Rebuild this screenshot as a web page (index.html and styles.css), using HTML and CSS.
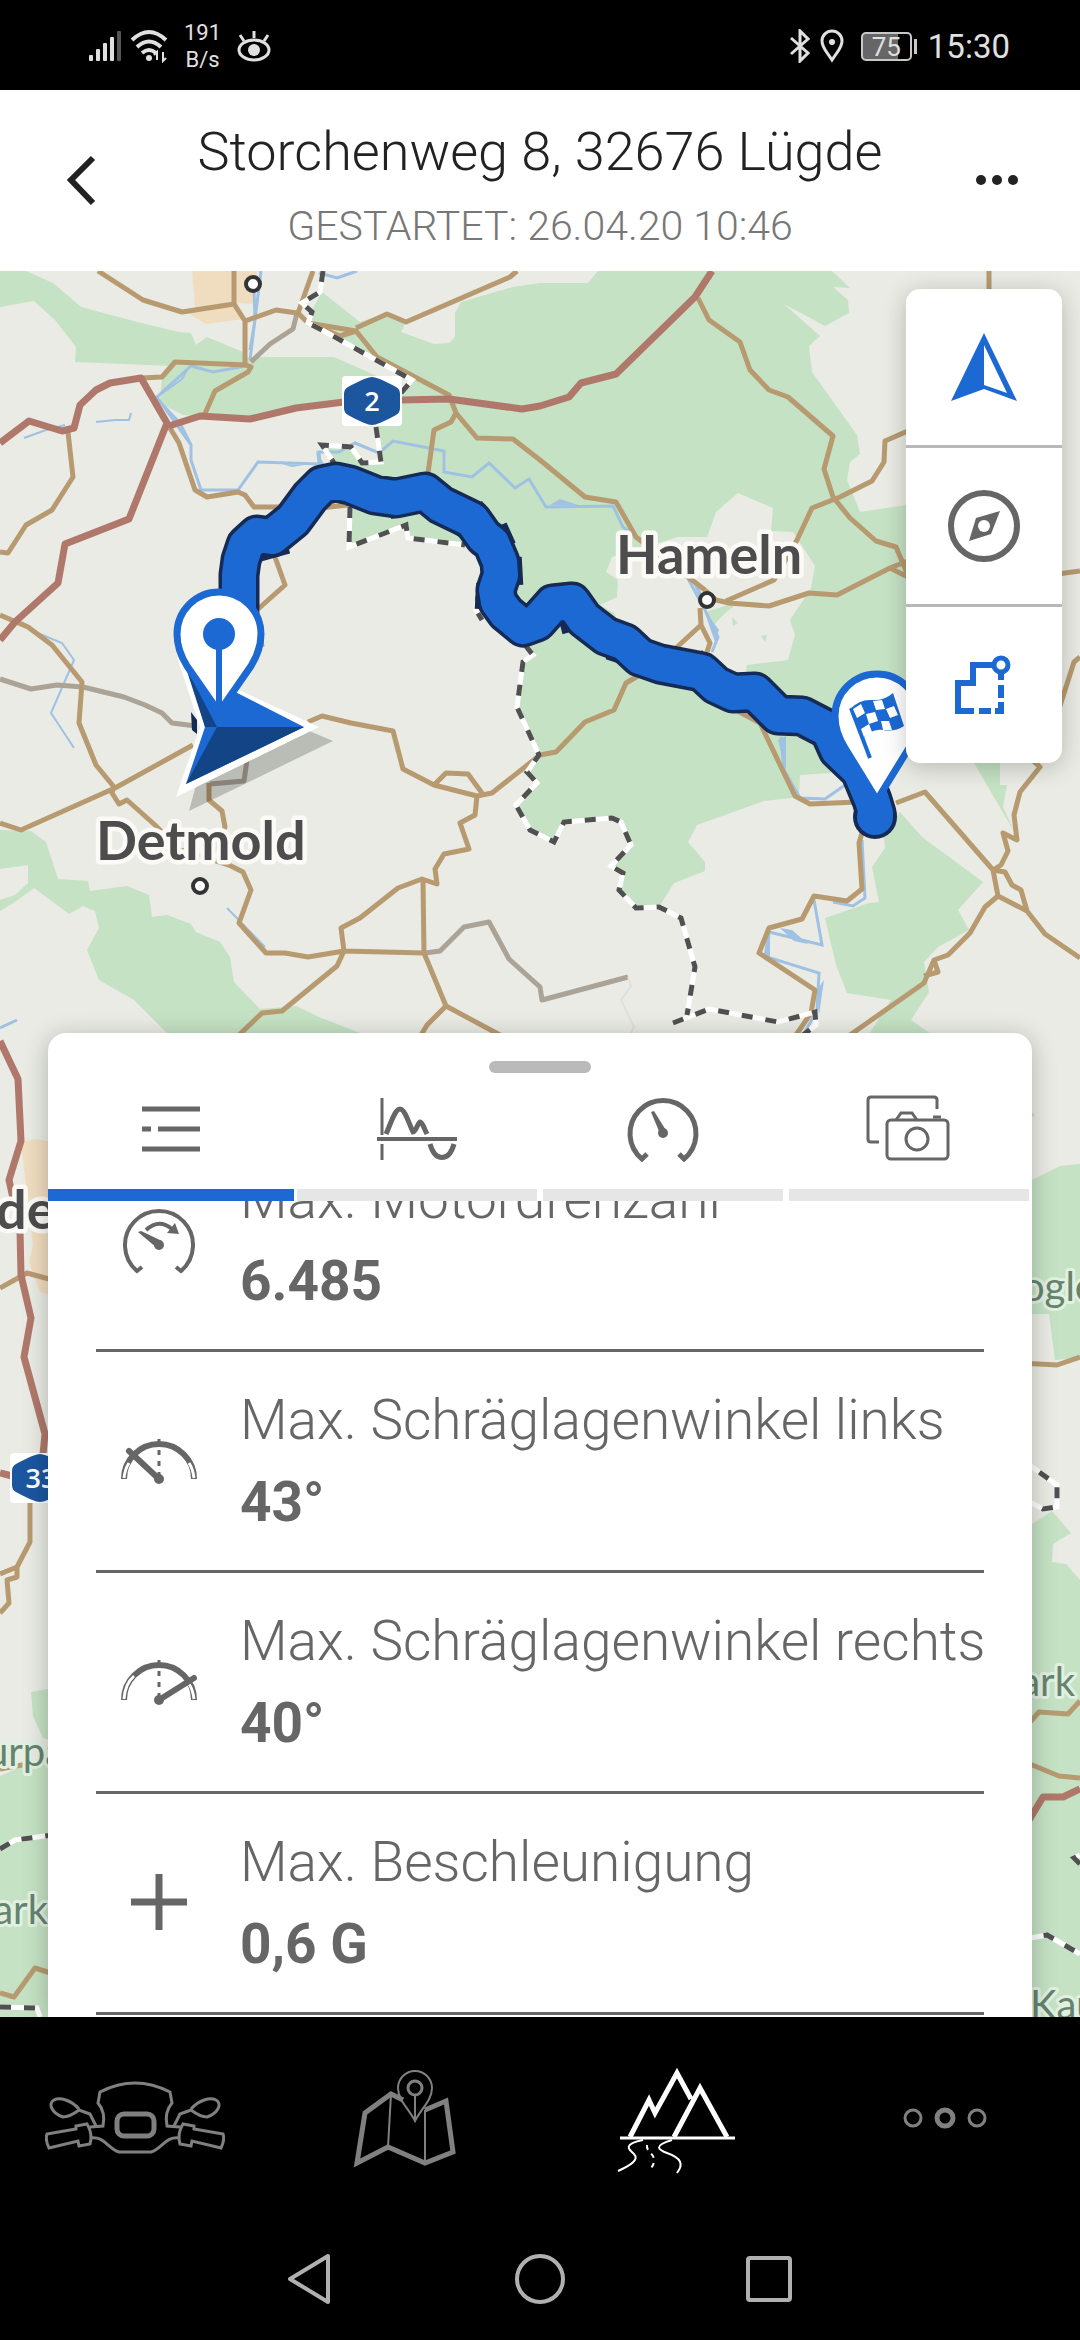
FILE: index.html
```
<!DOCTYPE html>
<html lang="de">
<head>
  <meta charset="utf-8">
  <meta name="viewport" content="width=device-width, initial-scale=1">
  <title>Storchenweg 8, 32676 Lügde</title>
  <link rel="stylesheet" href="styles.css">
</head>
<body>
  <div class="status-bar">
    <div class="status-group">
      <svg width="34" height="34" viewBox="0 0 34 34" fill="#e0e0e0">
        <rect x="1" y="26" width="4" height="6" rx="1"/>
        <rect x="8" y="20" width="4" height="12" rx="1"/>
        <rect x="15" y="14" width="4" height="18" rx="1"/>
        <rect x="22" y="8" width="4" height="24" rx="1"/>
        <rect x="29" y="2" width="4" height="30" rx="1" fill="#555"/>
      </svg>
      <svg width="38" height="34" viewBox="0 0 38 34" fill="none" stroke="#e0e0e0" stroke-width="4">
        <path d="M2 11Q19 -5 36 11M7 18Q19 7 31 18M12 24Q19 18 26 24"/>
        <circle cx="19" cy="29" r="3" fill="#e0e0e0" stroke="none"/>
        <path d="M27 31V23l-3 3M33 23v9l3-3" stroke-width="2"/>
      </svg>
      <div class="net-speed"><span>191</span><span>B/s</span></div>
      <svg width="34" height="34" viewBox="0 0 34 34" fill="none" stroke="#e0e0e0" stroke-width="3">
        <ellipse cx="17" cy="21" rx="15" ry="10"/>
        <circle cx="17" cy="21" r="6" fill="#e0e0e0" stroke="none"/>
        <path d="M17 9V2M7 12L3 6M27 12l4-6"/>
      </svg>
    </div>
    <div class="status-group">
      <svg width="22" height="34" viewBox="0 0 22 34" fill="none" stroke="#e0e0e0" stroke-width="3">
        <path d="M2 9l17 15-8 8V2l8 8L2 25"/>
      </svg>
      <svg width="26" height="34" viewBox="0 0 26 34" fill="none" stroke="#e0e0e0" stroke-width="3">
        <path d="M13 31C8 23 3 19 3 12a10 10 0 0 1 20 0c0 7-5 11-10 19z"/>
        <circle cx="13" cy="13" r="3" fill="#e0e0e0" stroke="none"/>
      </svg>
      <div class="battery">75</div>
      <span class="clock">15:30</span>
    </div>
  </div>

  <header class="header">
    <button class="header-btn" aria-label="Zurück">
      <svg width="54" height="54" viewBox="0 0 54 54" fill="none" stroke="#222" stroke-width="6">
        <path d="M39 4L17 26l22 23"/>
      </svg>
    </button>
    <div class="header-text">
      <h1>Storchenweg 8, 32676 Lügde</h1>
      <p>GESTARTET: 26.04.20 10:46</p>
    </div>
    <button class="header-btn" aria-label="Mehr">
      <svg width="54" height="54" viewBox="0 0 54 54" fill="#222">
        <circle cx="9" cy="26" r="5"/><circle cx="25" cy="26" r="5"/><circle cx="41" cy="26" r="5"/>
      </svg>
    </button>
  </header>

  <main class="map">
    <svg class="map-canvas" viewBox="0 271 1080 1746" preserveAspectRatio="xMidYMin slice">
      <!-- forest -->
      <g class="forest">
        <path d="M0 271H26L53 283 81 307 141 323 179 332 191 333 196 345 207 337 243 352 248 363 172 366 75 362 76 347 55 320 34 301 0 307z"/>
        <path d="M253 357H334L379 377 401 393 344 403 296 407 252 418 200 416 183 415 160 403 162 377 172 366z"/>
        <path d="M411 380L324 330 312 320 312 310 322 292 360 322 387 313 406 322 401 332 434 344 449 343 455 337 455 313 461 302 513 287 540 283 588 283 598 271H832L850 288 833 287 848 300 849 313 825 326 784 304 820 336 809 346 812 372 857 435 860 454 850 462 847 480 860 512 906 505V700L833 768 831 773 800 775 799 797 764 801 697 825 688 842 705 862 705 871 674 883 659 907 636 908 619 890 623 873 611 866 631 845 621 822 612 818 564 822 554 842 537 837 530 830 516 805 537 783 527 772 539 755 517 707 523 662 533 655 500 615 480 550 465 545 408 538 406 525 349 547 350 507 334 463 322 445 351 447 362 463 380 462 376 427 401 393z"/>
        <path d="M974 763H1000V785H1007L1003 807 1015 833z"/>
        <path d="M900 812L922 837 983 882 958 910 969 930 938 947 924 962 929 992 911 1020 931 1034H869L891 1000 847 993 836 965 825 918 869 903 879 902 872 867 885 848 884 837z"/>
        <path d="M0 830L31 831 46 842 58 879 88 881 90 891 127 886 149 895 152 917 167 915 191 924 196 932 220 942 230 957 234 982 260 1009 296 1006 319 1017 360 1033H167L134 1000 99 980 87 950 99 928 95 911 83 906 69 914 34 888 15 902 0 911V900L15 895 28 883V865L0 869z"/>
        <path d="M31 1692L60 1687V1743L43 1738 33 1716zM0 1776L60 1750V2017H0z"/>
        <path d="M1020 1186L1060 1166 1080 1164V1358L1055 1360 1049 1314H1020zM1020 1532L1052 1511 1071 1533 1053 1544 1052 1562 1066 1564 1080 1580V2017H1020zM1028 1109l7 6-7 6z"/>
      </g>
      <path class="land" d="M716 512L738 493 773 508 771 531 793 532 815 566 811 588 802 602 790 620 795 635 788 660 747 665 746 673 640 660 614 613 600 605 617 597 618 580 606 572 612 557 678 537 707 537z"/>
      <path class="forest" d="M706 612L740 601 722 616 714 625zM732 617l6 6-5 3zM761 636l6-1-2 7z"/>
      <path class="town" d="M192 271L195 307 186 312 206 324 243 319 238 303 253 304 257 271zM21 1142L37 1139 60 1144V1298L40 1292 29 1262 33 1245z"/>

      <!-- rivers -->
      <path class="river" d="M261 271L250 360M254 290L255 320 250 350M246 366L213 372 191 366 157 397 191 445 191 460 201 490 238 490 258 462 320 464 319 452 339 452 355 443 379 453 393 441 444 451 444 472 472 477 489 463 515 488 529 479 546 507 613 506 623 527 685 573 705 610 718 637 712 652M319 273L337 278 357 271M160 402L180 423 191 445"/>
      <path class="river thin" d="M24 438L46 430 65 425M96 422L115 420 129 420 131 413M22 622L40 634 62 643 74 660 51 713 74 748M227 908L265 947M157 397L182 379 187 370"/>
      <path class="river" d="M0 1028L17 1020M781 737L784 770 800 798 825 799 848 783M862 840L865 898 853 906 833 902M814 900L822 945 769 932 767 957 819 973 817 1010 805 1032"/>
      <path class="river-fill" d="M778 740l8-4v34zM780 928l12 2 16 14-14-3zM766 940l4-10v28l-6-4zM817 990l7-10-5 35zM690 575l9 12 8 20-8-10zM704 610l15 20-4 12zM550 505l10-6 18 6zM316 450l8 14-6 2zM282 464l10 3 12-2z"/>

      <!-- roads -->
      <path class="road gray" d="M297 313L293 329 270 344 251 362M0 679L31 689 57 685 83 687 124 697 145 705 162 713 172 723 196 726M425 953L440 951 464 927 489 922 509 959 540 987 542 1000 628 977M210 784L244 781 247 760"/>
      <path class="road faint" d="M628 977L631 986 621 1000 634 1027 631 1033"/>
      <path class="road" d="M98 271L143 300 182 312 234 304 245 321 276 310 297 313M234 271V304M245 321V363M313 271L298 313 308 323 356 331 377 357 449 395 456 413 477 438 513 439 540 460 585 497 616 502 636 537 705 590M308 323L340 336 356 331M517 271L510 277 406 322 387 314 356 328M141 378L162 377 175 362 246 365 251 367 248 372 215 391 203 418M167 423L179 443 195 490 207 497 238 492 245 495 254 507 279 507 320 508 348 505M68 432L73 477 52 510 26 525 8 553 0 552M456 413L451 422 434 430 428 473M275 557L285 585 257 610 262 647"/>
      <path class="road" d="M0 615L28 627 52 645 82 682 79 723 96 765 114 787 112 793 119 804 127 800 155 825 180 850 207 858 229 865 243 872 251 890 239 923 266 953 285 953 308 957 344 951 424 953M0 823L21 830 115 788 193 745M308 722L322 716 351 723 393 731 403 769 434 785 477 796 492 793 540 755 556 752 585 722 614 710 626 683 643 673M434 785L446 773 468 774 482 793M477 796L475 815 460 823 469 849 444 854 435 869 437 884 422 879 398 888 360 918 341 928 344 951 337 966 282 1011 262 1013 239 1035M423 880L424 953 446 1006 427 1025 421 1035M446 1006L500 1035M209 783V800L222 811 225 827 213 853"/>
      <path class="road" d="M698 298L709 320 740 342 750 370 769 390 788 397 833 436 824 469 833 497 850 518 876 541 896 547 910 580M910 430L885 441 884 462 872 481 840 497 812 508 797 540 774 580 726 601M705 590L716 600 729 603 769 606 809 593 837 595 890 568 910 560M890 568L908 577M700 608L701 625 676 648M701 625L710 643 707 652M989 271V300M1050 575L1080 571M1058 712L1074 662 1080 657"/>
      <path class="road" d="M736 710L760 723 795 796 810 804 857 802M896 803L925 792 993 870 1005 872 1012 885 1021 890 1027 911 998 896 993 870 1001 865 1008 851 1003 833 1017 840 1014 815 1020 792 1040 767 1030 758M1027 911L1045 934 1080 958M998 896L985 907 970 933 948 955 934 960 924 983 850 1035M934 960L938 972 924 976M862 833L859 843 862 889 847 901 814 896 802 919 769 928 759 953 815 990 811 1013 796 1035"/>
      <path class="road" d="M0 1288L27 1273 60 1282M30 1502V1542L17 1567 0 1574M17 1567V1577L7 1580 9 1603 0 1613M0 1769L60 1758M0 1993L14 1997 35 1968 60 1976M1020 1363L1057 1365 1080 1357M1020 1733L1039 1712 1068 1714 1080 1701M1020 1760L1059 1776 1080 1778"/>
      <path class="road major" d="M0 443L29 421 62 431 74 428 80 405 96 390 110 383 141 378 167 423 129 519 65 544 58 583 15 622 0 640M169 426L200 416 250 419 296 408 344 402 401 400 449 399 522 409 540 406 569 397 581 383 616 374 695 297 712 271M0 1041L18 1079 21 1141 9 1180 20 1230 21 1275 31 1318 24 1357 45 1434 43 1454M0 1473L12 1476M1020 1835L1043 1797H1063L1080 1789"/>

      <!-- district borders -->
      <path id="border" class="border-base" d="M323 271L320 292 302 303 312 312 308 323 324 331 412 380 401 393M376 427L381 462 362 463 351 447 322 445 334 463M350 507L349 547 406 525 408 538 465 545M479 590L476 610 482 620M525 645L533 655 523 662 517 707 539 755 527 772 537 783 516 805 530 830 554 842 564 822 612 818 621 822 631 845 611 866 623 873 619 890 636 908 659 907 681 918 695 967 687 1015M673 1023L709 1009 778 1022 815 1012 816 1025 803 1035M0 1849L15 1840 60 1834M0 2007L37 2008 40 2017M1020 1458L1057 1485V1507L1043 1509 1020 1497M1020 1940L1047 1935 1080 1954M1080 1864L1074 1858 1080 1855"/>
      <path class="border-dash" d="M323 271L320 292 302 303 312 312 308 323 324 331 412 380 401 393M376 427L381 462 362 463 351 447 322 445 334 463M350 507L349 547 406 525 408 538 465 545M479 590L476 610 482 620M525 645L533 655 523 662 517 707 539 755 527 772 537 783 516 805 530 830 554 842 564 822 612 818 621 822 631 845 611 866 623 873 619 890 636 908 659 907 681 918 695 967 687 1015M673 1023L709 1009 778 1022 815 1012 816 1025 803 1035M0 1849L15 1840 60 1834M0 2007L37 2008 40 2017M1020 1458L1057 1485V1507L1043 1509 1020 1497M1020 1940L1047 1935 1080 1954M1080 1864L1074 1858 1080 1855"/>

      <!-- road shields -->
      <g class="shield">
        <rect x="342" y="376" width="60" height="50" rx="4" fill="#fff"/>
        <path d="M372 377Q378 377 396 387 400 389 400 394V408Q400 413 396 415 378 425 372 425 366 425 348 415 344 413 344 408V394Q344 389 348 387 366 377 372 377z"/>
        <text x="372" y="411" text-anchor="middle">2</text>
        <rect x="10" y="1453" width="60" height="50" rx="4" fill="#fff"/>
        <path d="M40 1454Q46 1454 64 1464 68 1466 68 1471V1485Q68 1490 64 1492 46 1502 40 1502 34 1502 16 1492 12 1490 12 1485V1471Q12 1466 16 1464 34 1454 40 1454z"/>
        <text x="41" y="1488" text-anchor="middle">33</text>
      </g>

      <!-- places -->
      <g class="place-dot">
        <circle cx="253" cy="284" r="7"/>
        <circle cx="707" cy="600" r="7"/>
        <circle cx="200" cy="886" r="7"/>
      </g>
      <g class="place">
        <text x="616" y="574">Hameln</text>
        <text x="96" y="860">Detmold</text>
        <text x="-4" y="1229">de</text>
      </g>
      <g class="park">
        <text x="-14" y="1766">urpa</text>
        <text x="48" y="1924" text-anchor="end">ark</text>
        <text x="1022" y="1301">ogle</text>
        <text x="1075" y="1696" text-anchor="end">ark</text>
        <text x="1030" y="2019">Kau</text>
      </g>

      <!-- recorded route -->
      <path class="route-edge" d="M236 640L239 607 239 575 241 560 246 545 257 535 272 537 293 520 310 497 322 485 336 482 350 485 375 495 396 498 425 492 441 505 472 520 484 537 492 543 500 562 501 575 496 590 498 602 506 613 523 627 537 622 553 604 572 602 584 619 606 636 625 643 640 657 660 664 702 672 716 685 733 693 755 692 778 715 802 716 829 730 838 750 860 771 872 800 876 813"/>
      <path class="route-nick" d="M262 556L284 550M309 523L316 513M395 513L424 506M458 530L466 536M408 484L426 481M481 508L487 516M504 529L509 540M517 562L518 580M481 588L480 604M545 594L550 596M564 621L566 628M612 656L618 658M226 572L227 562M676 668L700 657M722 695L730 702M770 705L766 700"/>
      <circle cx="875" cy="817" r="22" fill="#152a55"/>
      <path class="route" d="M236 640L239 607 239 575 241 560 246 545 257 535 272 537 293 520 310 497 322 485 336 482 350 485 375 495 396 498 425 492 441 505 472 520 484 537 492 543 500 562 501 575 496 590 498 602 506 613 523 627 537 622 553 604 572 602 584 619 606 636 625 643 640 657 660 664 702 672 716 685 733 693 755 692 778 715 802 716 829 730 838 750 860 771 872 800 876 813"/>
      <circle cx="875" cy="817" r="18" fill="#1c69d4"/>

      <!-- current position -->
      <path d="M191 712l6 8v14l-5-4z" fill="#152a55"/>
      <path d="M333 741L189 811 200 770 300 727z" fill="#000" opacity=".2"/>
      <path d="M176 797L319 727 239 690 177 657 200 727z" fill="#fff"/>
      <path d="M186 784L304 727 188 668 205 727z" fill="#1c69d4"/>
      <path d="M186 784L304 727H217zM186 668L217 727H205z" fill="#124486"/>

      <!-- start and finish pins -->
      <path class="pin" d="M219 712L187 666Q177 650 177 634a42 42 0 0 1 84 0Q261 650 251 666z"/>
      <circle cx="219" cy="634" r="16" fill="#1c69d4"/>
      <path d="M219 640V708" stroke="#1c69d4" stroke-width="6"/>
      <path class="pin" d="M877 800L845 748Q835 732 835 716a42 42 0 0 1 84 0Q919 732 909 748z"/>
      <path d="M851 708L870 758" stroke="#1c69d4" stroke-width="4"/>
      <path d="M850 709Q860 699 872 700T893 693L904 726Q895 732 883 730T862 740z" fill="#1c69d4"/>
      <path d="M853 709l8-5 4 9-8 5zM873 701l9-1 3 9-9 1zM866 714l9-2 3 9-9 3zM886 709l8-3 4 9-8 3zM861 729l8-5 3 8-8 5zM881 721l8 0 3 9-9 0z" fill="#fff"/>
    </svg>

    <div class="map-tools">
      <button class="tool-btn" aria-label="Position">
        <svg width="78" height="78" viewBox="0 0 78 78" fill="#1c69d4">
          <path fill-rule="evenodd" d="M39 5L72 73 39 61 6 73zM39 17V57L62 65z"/>
        </svg>
      </button>
      <button class="tool-btn" aria-label="Kompass">
        <svg width="78" height="78" viewBox="0 0 78 78">
          <circle cx="39" cy="39" r="33" fill="none" stroke="#666" stroke-width="6"/>
          <path d="M55 24L46 47 24 54 31 31z" fill="#666"/>
          <circle cx="39" cy="39" r="6" fill="#fff"/>
        </svg>
      </button>
      <button class="tool-btn" aria-label="Route">
        <svg width="78" height="78" viewBox="0 0 78 78" fill="none" stroke="#1c69d4" stroke-width="6">
          <path d="M49 19H28V37H13V68M13 65H29M34 65H46M50 65H59M56 27V34M56 39V52M56 56V68"/>
          <circle cx="56" cy="19" r="7" stroke-width="5"/>
        </svg>
      </button>
    </div>

    <section class="sheet">
      <div class="handle"></div>
      <div class="tabs" role="tablist">
        <button class="tab active" role="tab" aria-selected="true" aria-label="Liste">
          <svg width="96" height="80" viewBox="0 0 96 80" stroke="#666" stroke-width="5">
            <path d="M19 18H77M19 38H28M35 38H77M19 58H77"/>
          </svg>
        </button>
        <button class="tab" role="tab" aria-selected="false" aria-label="Verlauf">
          <svg width="96" height="80" viewBox="0 0 96 80" fill="none" stroke="#666" stroke-width="3">
            <path d="M13 7V44M13 53V69"/>
            <path d="M8 48H88" stroke-width="4"/>
            <path d="M17 43C22 32 26 18 31 18S40 33 44 41C47 41 49 31 51 31S56 39 58 43" stroke-width="5"/>
            <path d="M61 53C66 71 80 71 85 53" stroke-width="5"/>
          </svg>
        </button>
        <button class="tab" role="tab" aria-selected="false" aria-label="Geschwindigkeit">
          <svg width="96" height="80" viewBox="0 0 96 80" fill="none" stroke="#666" stroke-width="5">
            <path d="M32 63L27 68A33 33 0 1 1 69 68L64 63"/>
            <path d="M36 21L39 20 52 41 46 45z" fill="#666" stroke="none"/>
            <circle cx="48" cy="42" r="5" fill="#666" stroke="none"/>
          </svg>
        </button>
        <button class="tab" role="tab" aria-selected="false" aria-label="Fotos">
          <svg width="96" height="80" viewBox="0 0 96 80" fill="none" stroke="#666" stroke-width="3">
            <path d="M18 51H10Q7 51 7 48V9Q7 6 10 6H73Q76 6 76 9V18"/>
            <rect x="26" y="29" width="61" height="39" rx="4"/>
            <path d="M35 29L40 22H51L56 29M72 26H80"/>
            <circle cx="56" cy="48" r="11"/>
          </svg>
        </button>
      </div>

      <ul class="stats">
        <li class="stat">
          <svg class="stat-icon" width="126" height="90" viewBox="0 0 126 90" fill="none" stroke="#666" stroke-width="4">
            <path d="M46 72L41 76A34 34 0 1 1 85 76L80 72"/>
            <path d="M50 35Q63 23 76 34"/>
            <path d="M71 38L83 39 79 28z" fill="#666" stroke="none"/>
            <path d="M42 37L45 36 66 46 61 53z" fill="#666" stroke="none"/>
            <circle cx="63" cy="50" r="5" fill="#666" stroke="none"/>
          </svg>
          <div class="stat-text">
            <span class="label">Max. Motordrehzahl</span>
            <span class="value">6.485</span>
          </div>
        </li>
        <li class="stat">
          <svg class="stat-icon" width="126" height="90" viewBox="0 0 126 90" fill="none" stroke="#666">
            <path d="M28 63A35 35 0 0 1 98 63" stroke-width="6"/>
            <path d="M28 62Q29 53 33 47M98 62Q97 53 93 47" stroke="#fff" stroke-width="3"/>
            <path d="M63 23V60" stroke-width="3" stroke-dasharray="5 6"/>
            <path d="M33 35L63 63" stroke-width="6" stroke-linecap="round"/>
            <circle cx="63" cy="63" r="5" fill="#666" stroke="none"/>
          </svg>
          <div class="stat-text">
            <span class="label">Max. Schräglagenwinkel links</span>
            <span class="value">43°</span>
          </div>
        </li>
        <li class="stat">
          <svg class="stat-icon" width="126" height="90" viewBox="0 0 126 90" fill="none" stroke="#666">
            <path d="M28 63A35 35 0 0 1 98 63" stroke-width="6"/>
            <path d="M28 62Q29 47 38 39M98 62Q97 53 93 47" stroke="#fff" stroke-width="3"/>
            <path d="M63 23V60" stroke-width="3" stroke-dasharray="5 6"/>
            <path d="M98 41L63 63" stroke-width="6" stroke-linecap="round"/>
            <circle cx="63" cy="63" r="5" fill="#666" stroke="none"/>
          </svg>
          <div class="stat-text">
            <span class="label">Max. Schräglagenwinkel rechts</span>
            <span class="value">40°</span>
          </div>
        </li>
        <li class="stat">
          <svg class="stat-icon" width="126" height="90" viewBox="0 0 126 90" fill="none" stroke="#666" stroke-width="7">
            <path d="M63 16V72M35 44H91"/>
          </svg>
          <div class="stat-text">
            <span class="label">Max. Beschleunigung</span>
            <span class="value">0,6 G</span>
          </div>
        </li>
      </ul>
    </section>
  </main>

  <nav class="app-nav">
    <a class="nav-link" href="#" aria-label="Fahrzeug">
      <svg width="180" height="100" viewBox="0 0 180 100" fill="none" stroke="#808080" stroke-width="3">
        <path d="M45 59L58 58C59 53 60 43 53 35L55 24Q90 6 125 24L127 35C120 43 121 53 122 58L135 59"/>
        <rect x="72" y="46" width="37" height="22" rx="7" stroke-width="5"/>
        <path d="M45 70C60 68 62 80 74 84H106C118 80 120 68 135 70"/>
        <path id="bar" d="M34 41C26 32 15 29 9 32 3 35 6 45 18 49 24 49 30 45 34 42L45 46 51 58M2 66L31 61V58L42 56Q48 66 45 76L34 78 33 73 4 80Q0 72 2 66z"/>
        <use href="#bar" transform="translate(180 0) scale(-1 1)"/>
      </svg>
    </a>
    <a class="nav-link" href="#" aria-label="Karte">
      <svg width="120" height="120" viewBox="0 0 120 120" fill="none" stroke="#808080" stroke-width="5">
        <path d="M58 42L46 36 20 55 12 105 43 89 80 105 108 94 101 43 80 52"/>
        <path d="M46 36L43 89M80 52V105" stroke-width="2"/>
        <path d="M70 63C64 51 53 42 53 30a17 17 0 0 1 34 0C87 42 76 51 70 63zV37" stroke-width="2"/>
        <circle cx="70" cy="30" r="7" stroke-width="3"/>
      </svg>
    </a>
    <a class="nav-link" href="#" aria-label="Touren" aria-current="page">
      <svg width="120" height="120" viewBox="0 0 120 120" fill="none" stroke="#fff" stroke-width="5">
        <path d="M15 79L34 42 40 55 62 15 76 41M59 79L85 30 112 79"/>
        <path d="M5 80H122" stroke-width="3"/>
        <path d="M28 82C8 86 13 91 19 96 25 102 14 108 3 113M57 82C37 88 44 92 52 95 66 100 69 106 62 115" stroke-width="2"/>
        <path d="M32 87C31 94 39 95 39 102 39 107 37 109 34 112" stroke-width="2" stroke-dasharray="5 5"/>
      </svg>
    </a>
    <a class="nav-link" href="#" aria-label="Mehr">
      <svg width="90" height="30" viewBox="0 0 90 30" fill="none" stroke="#808080" stroke-width="3">
        <circle cx="13" cy="15" r="8"/>
        <circle cx="45" cy="15" r="8" stroke-width="5"/>
        <circle cx="77" cy="15" r="8"/>
      </svg>
    </a>
  </nav>

  <div class="system-nav">
    <button aria-label="Zurück">
      <svg width="60" height="60" viewBox="0 0 60 60" fill="none" stroke="#b0b0b0" stroke-width="4" stroke-linejoin="round">
        <path d="M48 6V52L10 29z"/>
      </svg>
    </button>
    <button aria-label="Start">
      <svg width="60" height="60" viewBox="0 0 60 60" fill="none" stroke="#b0b0b0" stroke-width="4">
        <circle cx="30" cy="29" r="23"/>
      </svg>
    </button>
    <button aria-label="Übersicht">
      <svg width="60" height="60" viewBox="0 0 60 60" fill="none" stroke="#b0b0b0" stroke-width="4">
        <rect x="8" y="8" width="42" height="42" rx="2"/>
      </svg>
    </button>
  </div>
</body>
</html>
```
FILE: styles.css
```
* {
  box-sizing: border-box;
}
body {
  margin: 0;
  height: 100vh;
  display: flex;
  flex-direction: column;
  background: #000;
  font-family: Roboto, "Open Sans", sans-serif;
  overflow: hidden;
}
button {
  padding: 0;
  border: none;
  background: none;
}
svg {
  display: block;
}
.status-bar {
  height: 90px;
  flex: none;
  display: flex;
  align-items: center;
  justify-content: space-between;
  padding: 2px 70px 0 88px;
  color: #e0e0e0;
}
.status-group {
  display: flex;
  align-items: center;
  gap: 8px;
}
.net-speed {
  display: flex;
  flex-direction: column;
  align-items: center;
  margin: 0 8px;
  font-size: 22px;
  line-height: 27px;
}
.battery {
  position: relative;
  width: 51px;
  height: 29px;
  margin: 0 8px;
  border: 2px solid #c8c8c8;
  border-radius: 5px;
  background: linear-gradient(to right, #666 75%, #000 75%);
  font-size: 26px;
  line-height: 26px;
  text-align: center;
}
.battery::after {
  content: "";
  position: absolute;
  top: 5px;
  right: -7px;
  width: 3px;
  height: 15px;
  background: #c8c8c8;
}
.clock {
  font-size: 33px;
}
.header {
  flex: none;
  height: 181px;
  display: flex;
  align-items: center;
  justify-content: space-between;
  padding: 0 54px;
  background: #fff;
  text-align: center;
}
.header-text {
  padding-top: 14px;
}
.header h1 {
  margin: 0;
  font-size: 54px;
  font-weight: 300;
  line-height: 76px;
  color: #222;
}
.header p {
  margin: 0;
  font-size: 41px;
  font-weight: 300;
  line-height: 72px;
  color: #777;
}
.map {
  flex: 1;
  min-height: 0;
  position: relative;
  overflow: hidden;
  background: #e9ebe4;
}
.map-canvas {
  width: 100%;
  height: 100%;
}
.forest {
  fill: #c5e2c4;
}
.land {
  fill: #e9ebe4;
}
.town {
  fill: #f0ddc0;
}
.river {
  fill: none;
  stroke: #9fc1e4;
  stroke-width: 3;
}
.river.thin {
  stroke-width: 2;
}
.river-fill {
  fill: #9fc1e4;
}
.road {
  fill: none;
  stroke: #b79a70;
  stroke-width: 5;
  stroke-linejoin: round;
}
.road.gray {
  stroke: #aca397;
}
.road.faint {
  stroke: #dfe0d9;
  stroke-width: 2;
}
.road.major {
  stroke: #b0786b;
  stroke-width: 7;
}
.border-base,
.border-dash {
  fill: none;
  stroke: #fff;
  stroke-width: 5;
}
.border-dash {
  stroke: #505050;
  stroke-dasharray: 11 13;
}
.shield {
  fill: #1c569f;
}
.shield text {
  font: 600 27px "Open Sans", sans-serif;
  fill: #fff;
}
.place-dot {
  fill: #fff;
  stroke: #333;
  stroke-width: 4;
}
.place,
.park {
  font-family: Lato, "Open Sans", sans-serif;
  stroke: #fbfaf7;
  stroke-width: 9;
  stroke-linejoin: round;
  paint-order: stroke;
}
.place {
  font-size: 54px;
  font-weight: 700;
  fill: #4d4d4d;
}
.park {
  font-size: 40px;
  stroke: #e2f0e0;
  stroke-width: 6;
  fill: #65836f;
}
.route-edge,
.route,
.route-nick {
  fill: none;
  stroke-linejoin: round;
  stroke-linecap: round;
}
.route-edge {
  stroke: #152a55;
  stroke-width: 41;
}
.route-nick {
  stroke: #152a55;
  stroke-width: 10;
  stroke-linecap: square;
}
.route {
  stroke: #1c69d4;
  stroke-width: 34;
}
.pin {
  fill: #fff;
  stroke: #1c69d4;
  stroke-width: 7;
}
.map-tools {
  position: absolute;
  top: 18px;
  right: 18px;
  width: 156px;
  border-radius: 14px;
  background: #fff;
  box-shadow: 0 4px 24px rgba(0, 0, 0, .22);
}
.tool-btn {
  width: 100%;
  height: 156px;
  display: flex;
  align-items: center;
  justify-content: center;
}
.tool-btn + .tool-btn {
  height: 159px;
  border-top: 3px solid #b8b8b8;
}
.sheet {
  position: absolute;
  top: 762px;
  bottom: 0;
  left: 48px;
  right: 48px;
  display: flex;
  flex-direction: column;
  border-radius: 18px 18px 0 0;
  background: #fff;
  box-shadow: 0 4px 24px rgba(0, 0, 0, .25);
}
.handle {
  flex: none;
  width: 102px;
  height: 12px;
  margin: 28px auto 0;
  border-radius: 6px;
  background: #bababa;
}
.tabs {
  flex: none;
  display: flex;
}
.tab {
  flex: 1;
  display: flex;
  flex-direction: column;
  align-items: center;
  padding-top: 18px;
}
.tab::after {
  content: "";
  align-self: stretch;
  height: 12px;
  margin: 18px 3px 0;
  background: #e6e6e6;
}
.tab.active::after {
  margin: 18px 0 0;
  background: #1c69d4;
}
.stats {
  flex: 1;
  min-height: 0;
  display: flex;
  flex-direction: column;
  justify-content: flex-end;
  margin: 0;
  padding: 0 48px 2px;
  list-style: none;
  overflow: hidden;
}
.stat {
  flex: none;
  display: flex;
  align-items: center;
  gap: 18px;
  padding: 27px 0;
  border-bottom: 3px solid #666;
  color: #666;
}
.stat-icon {
  flex: none;
}
.stat-text {
  display: flex;
  flex-direction: column;
  font-size: 55px;
  line-height: 82px;
  white-space: nowrap;
}
.label {
  font-weight: 300;
}
.value {
  font-weight: 700;
}
.app-nav {
  flex: none;
  height: 202px;
  display: flex;
}
.nav-link {
  flex: 1;
  display: flex;
  align-items: center;
  justify-content: center;
}
.system-nav {
  flex: none;
  height: 121px;
  display: flex;
  align-items: center;
  justify-content: center;
  gap: 170px;
}
```
